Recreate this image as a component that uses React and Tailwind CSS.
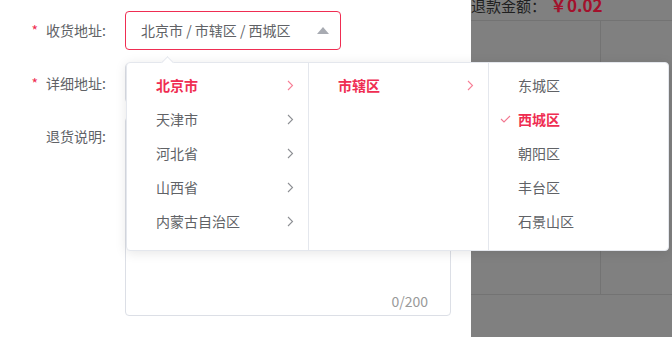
import React from "react";

const RED = "#ef2d52";

const provinces = ["北京市", "天津市", "河北省", "山西省", "内蒙古自治区"];
const districts = ["东城区", "西城区", "朝阳区", "丰台区", "石景山区"];

function Chevron({ color }) {
  return (
    <svg width="7" height="11" viewBox="0 0 7 11" fill="none">
      <path d="M1 1l4.5 4.5L1 10" stroke={color} strokeWidth="1.1" />
    </svg>
  );
}

function Check() {
  return (
    <svg width="11" height="8" viewBox="0 0 11 8" fill="none">
      <path d="M1 4l3 3 6-6" stroke="#f27790" strokeWidth="1.1" />
    </svg>
  );
}

function CascaderPanel() {
  return (
    <div className="absolute left-[126px] top-[62px] w-[543px] h-[189px] bg-white border border-[#e4e7ed] rounded-[4px] shadow-[0_2px_12px_rgba(0,0,0,0.1)] flex">
      {/* little popper arrow */}
      <div className="absolute -top-[5px] left-[36px] w-[9px] h-[9px] bg-white border-l border-t border-[#e4e7ed] rotate-45" />
      <div className="w-[182px] border-r border-[#e4e7ed] pt-[5px]">
        {provinces.map((p, i) => (
          <div
            key={p}
            className="h-[34px] flex items-center justify-between pl-[29px] pr-[14px]"
          >
            <span
              className={i === 0 ? "font-bold" : "text-[#606266]"}
              style={i === 0 ? { color: RED } : undefined}
            >
              {p}
            </span>
            <Chevron color={i === 0 ? "#f77f96" : "#8d8f94"} />
          </div>
        ))}
      </div>
      <div className="w-[180px] border-r border-[#e4e7ed] pt-[5px]">
        <div className="h-[34px] flex items-center justify-between pl-[29px] pr-[14px]">
          <span className="font-bold" style={{ color: RED }}>
            市辖区
          </span>
          <Chevron color="#f77f96" />
        </div>
      </div>
      <div className="flex-1 pt-[5px]">
        {districts.map((d, i) => (
          <div key={d} className="h-[34px] flex items-center relative pl-[29px]">
            {i === 1 && (
              <span className="absolute left-[11px] top-[13px]">
                <Check />
              </span>
            )}
            <span
              className={i === 1 ? "font-bold" : "text-[#606266]"}
              style={i === 1 ? { color: RED } : undefined}
            >
              {d}
            </span>
          </div>
        ))}
      </div>
    </div>
  );
}

export default function App() {
  return (
    <div
      className="w-[672px] h-[337px] flex overflow-hidden text-[14px]"
      style={{ fontFamily: '"Noto Sans CJK SC", "Noto Sans", sans-serif' }}
    >
      <div className="w-[471px] bg-white relative pt-[11px]">
        <div className="flex items-center h-[39px]">
          <label className="w-[125px] pr-[19px] text-right text-[#606266]">
            <span className="mr-[8px]" style={{ color: RED }}>*</span>
            收货地址:
          </label>
          <div
            className="w-[216px] h-[39px] border rounded-[4px] flex items-center justify-between pl-[15px] pr-[11px]"
            style={{ borderColor: RED }}
          >
            <span className="text-[#606266]">北京市 / 市辖区 / 西城区</span>
            <svg width="12" height="7" viewBox="0 0 12 7">
              <path d="M6 0l6 7H0z" fill="#a8abb2" />
            </svg>
          </div>
        </div>

        <div className="flex items-center h-[40px] mt-[13px]">
          <label className="w-[125px] pr-[19px] text-right text-[#606266]">
            <span className="mr-[8px]" style={{ color: RED }}>*</span>
            详细地址:
          </label>
          <div className="w-[325px] h-[40px] border border-[#dcdfe6] rounded-[4px]" />
        </div>

        <div className="flex mt-[14px]">
          <label className="w-[125px] pr-[19px] text-right text-[#606266] pt-[9px]">
            退货说明:
          </label>
          <div className="w-[326px] h-[199px] border border-[#dcdfe6] rounded-[4px] relative">
            <span className="absolute right-[22px] bottom-[3px] text-[#999]">0/200</span>
          </div>
        </div>

        <CascaderPanel />
      </div>

      <div className="flex-1 bg-[#808080] flex flex-col">
        <div className="h-[22px] border-b border-[#737373] flex items-end pb-[7px] -mt-[1px]">
          <span className="text-[#1f1f1f] text-[15px] leading-none">退款金额：</span>
          <span className="text-[#a3112c] font-bold text-[17px] leading-none ml-[4px]">￥0.02</span>
        </div>
        <div className="h-[274px] border-b border-[#737373] flex">
          <div className="w-[130px] border-r border-[#737373]" />
        </div>
      </div>
    </div>
  );
}
